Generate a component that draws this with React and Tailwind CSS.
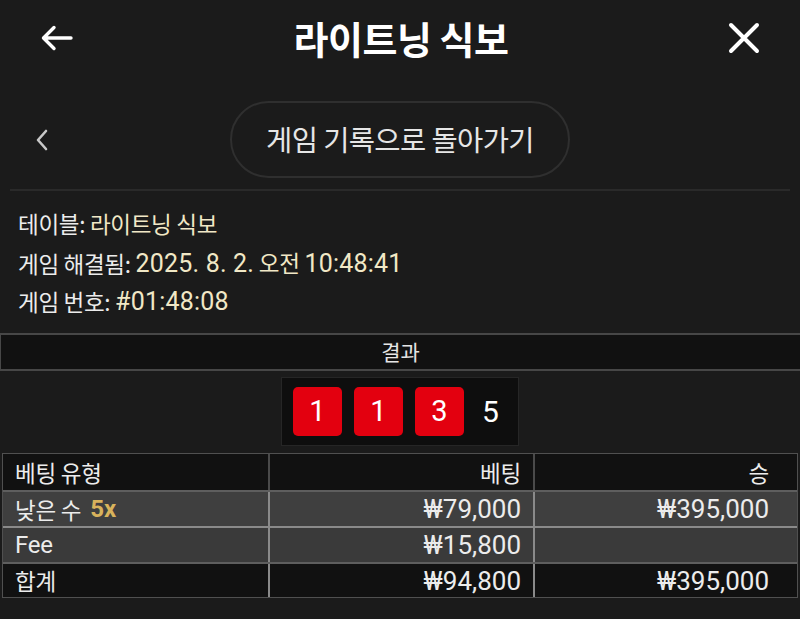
import React from 'react';

const rows = [
  { type: 'low', bet: '₩79,000', win: '₩395,000', bg: 'bg-[#3f3f3f]', h: 'h-[36px]' },
  { type: 'fee', bet: '₩15,800', win: '', bg: 'bg-[#3a3a3a]', h: 'h-[36px]' },
  { type: 'total', bet: '₩94,800', win: '₩395,000', bg: 'bg-[#111111]', h: 'h-[35px]' },
];

const num = { fontFamily: 'Roboto, "Noto Sans CJK KR", sans-serif' };

export default function App() {
  return (
    <div
      className="w-[800px] h-[619px] bg-[#1b1b1b] text-[#ececec] overflow-hidden"
      style={{ fontFamily: '"Noto Sans CJK KR", "Noto Sans", sans-serif' }}
    >
      {/* Top bar */}
      <div className="h-[76px] flex items-center justify-between pl-[40px] pr-[40px]">
        <svg width="34" height="26" viewBox="0 0 34 26" fill="none" stroke="white" strokeWidth="3.4" strokeLinecap="round" strokeLinejoin="round">
          <path d="M31 13H3.5M14 2.5L3.5 13L14 23.5" />
        </svg>
        <h1 className="text-[38px] font-bold text-white tracking-[-0.5px] leading-none">라이트닝 식보</h1>
        <svg width="32" height="32" viewBox="0 0 32 32" fill="none" stroke="white" strokeWidth="4" strokeLinecap="round">
          <path d="M3 3L29 29M29 3L3 29" />
        </svg>
      </div>

      {/* Back to history */}
      <div className="mt-[25px] h-[77px] flex items-center relative">
        <div className="absolute left-[34px] top-[28px]">
          <svg width="16" height="22" viewBox="0 0 16 22" fill="none" stroke="#c8c8c8" strokeWidth="2.6" strokeLinecap="round" strokeLinejoin="round">
            <path d="M12 2L4 11L12 20" />
          </svg>
        </div>
        <button className="mx-auto w-[340px] h-[77px] rounded-full border-2 border-[#2f2f2f] text-[28.5px] text-[#e6e6e6] tracking-[-0.6px] flex items-center justify-center">
          게임 기록으로 돌아가기
        </button>
      </div>

      <div className="mt-[11px] mx-[10px] h-[2px] bg-[#2a2a2a]" />

      {/* Info */}
      <div className="pl-[18px] pt-[13px] text-[22.5px] tracking-[-0.3px]">
        <div className="h-[40px] flex items-center">
          테이블:&nbsp;<span className="text-[#f1e8c6]">라이트닝 식보</span>
        </div>
        <div className="h-[39px] flex items-center">
          게임 해결됨:&nbsp;
          <span className="text-[#f1e8c6]">
            <span className="text-[25px] tracking-[0.2px]" style={num}>2025. 8. 2.</span> 오전{' '}
            <span className="text-[25px] tracking-[0.2px]" style={num}>10:48:41</span>
          </span>
        </div>
        <div className="h-[38px] flex items-center">
          게임 번호:&nbsp;
          <span className="text-[#f1e8c6] text-[25px] tracking-[0.2px]" style={num}>#01:48:08</span>
        </div>
      </div>

      {/* Result header */}
      <div className="mt-[12px] h-[38px] bg-[#111111] border-y-2 border-l border-[#474747] flex items-center justify-center text-[21px] text-[#e6e6e6]">
        결과
      </div>

      {/* Dice */}
      <div className="mt-[6px] flex justify-center">
        <div className="w-[238px] h-[69px] bg-[#0e0e0e] border border-[#262626] flex items-center pl-[11px] gap-[12px]">
          {[1, 1, 3].map((n, i) => (
            <div
              key={i}
              className="w-[49px] h-[49px] rounded-[5px] bg-[#e3000f] flex items-center justify-center text-[29px] text-white"
              style={num}
            >
              {n}
            </div>
          ))}
          <div className="ml-[6px] text-[30px] text-white" style={num}>
            5
          </div>
        </div>
      </div>

      {/* Bets table */}
      <div className="mt-[7px] ml-[2px] w-[796px] border border-[#505050] text-[22.5px] leading-[1.2] tracking-[-0.2px]">
        <div className="grid grid-cols-[265px_265px_1fr] h-[36px] bg-[#111111] text-[#ececec]">
          <div className="pl-[12px] flex items-center">베팅 유형</div>
          <div className="pr-[12px] flex items-center justify-end border-l-2 border-[#4a4a4a]">베팅</div>
          <div className="pr-[28px] flex items-center justify-end border-l-2 border-[#4a4a4a]">승</div>
        </div>
        {rows.map((r, i) => (
          <div
            key={i}
            className={`grid grid-cols-[265px_265px_1fr] ${r.h} ${r.bg} border-t-2 ${
              i === 1 ? 'border-[#8a8a8a]' : 'border-[#5e5e5e]'
            }`}
          >
            <div className="pl-[12px] flex items-center">
              {r.type === 'low' && (
                <>
                  낮은 수 <span className="ml-[9px] font-bold text-[#d8b35c] text-[24px]" style={num}>5x</span>
                </>
              )}
              {r.type === 'fee' && <span className="text-[24px]" style={num}>Fee</span>}
              {r.type === 'total' && '합계'}
            </div>
            <div
              className="pr-[12px] flex items-center justify-end border-l-2 border-[#8a8a8a] text-[26px] leading-none tracking-[0px]"
              style={num}
            >
              {r.bet}
            </div>
            <div
              className="pr-[28px] flex items-center justify-end border-l-2 border-[#8a8a8a] text-[26px] leading-none tracking-[0px]"
              style={num}
            >
              {r.win}
            </div>
          </div>
        ))}
      </div>
    </div>
  );
}
